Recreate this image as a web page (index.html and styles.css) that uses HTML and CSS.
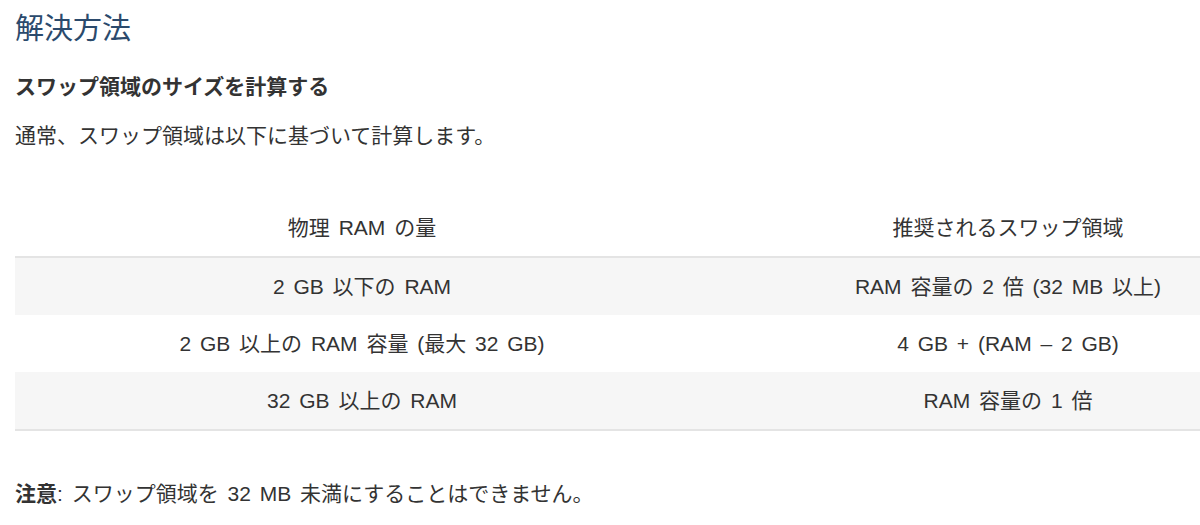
FILE: index.html
```html
<!DOCTYPE html>
<html lang="ja">
<head>
  <meta charset="UTF-8">
  <title>解決方法</title>
  <link rel="stylesheet" href="styles.css">
</head>
<body>
  <div class="article">
    <!-- Section title -->
    <h2 class="section-title">解決方法</h2>

    <h3 class="sub-title">スワップ領域のサイズを計算する</h3>
    <p class="text">通常、スワップ領域は以下に基づいて計算します。</p>

    <!-- Swap table -->
    <table class="swap-table">
      <colgroup>
        <col class="col-ram">
        <col class="col-swap">
      </colgroup>
      <thead>
        <tr>
          <th>物理 RAM の量</th>
          <th>推奨されるスワップ領域</th>
        </tr>
      </thead>
      <tbody>
        <tr>
          <td>2 GB 以下の RAM</td>
          <td>RAM 容量の 2 倍 (32 MB 以上)</td>
        </tr>
        <tr>
          <td>2 GB 以上の RAM 容量 (最大 32 GB)</td>
          <td>4 GB + (RAM – 2 GB)</td>
        </tr>
        <tr>
          <td>32 GB 以上の RAM</td>
          <td>RAM 容量の 1 倍</td>
        </tr>
      </tbody>
    </table>

    <p class="text note"><strong>注意</strong>: スワップ領域を 32 MB 未満にすることはできません。</p>
  </div>
</body>
</html>
```

FILE: styles.css
```css
/* Base */
body {
  margin: 0;
  padding: 0;
  overflow: hidden;
  background: #fff;
  color: #333;
  font-family: "Liberation Sans", "Noto Sans CJK JP", sans-serif;
  font-size: 21px;
  word-spacing: 3px;
}

.article {
  padding: 12px 0 0 15px;
}

/* Headings */
.section-title {
  margin: 0;
  font-size: 29px;
  line-height: 34px;
  font-weight: normal;
  color: #2b4a6c;
}

.sub-title {
  margin: 28px 0 0;
  font-size: 21px;
  line-height: 25px;
  font-weight: bold;
  color: #333;
}

.text {
  margin: 24px 0 0;
  line-height: 25px;
}

/* Table */
.swap-table {
  margin-top: 51px;
  width: 1292px;
  border-collapse: collapse;
  table-layout: fixed;
}

.col-ram {
  width: 694px;
}

.col-swap {
  width: 598px;
}

.swap-table th,
.swap-table td {
  padding: 16px 10px;
  line-height: 25px;
  text-align: center;
  font-weight: normal;
}

.swap-table thead th {
  border-bottom: 2px solid #e4e4e4;
}

.swap-table tbody tr:nth-child(odd) {
  background: #f6f6f6;
}

.swap-table tbody tr:last-child {
  border-bottom: 2px solid #e4e4e4;
}

.note {
  margin-top: 50px;
}

.note strong {
  font-weight: bold;
}
```
